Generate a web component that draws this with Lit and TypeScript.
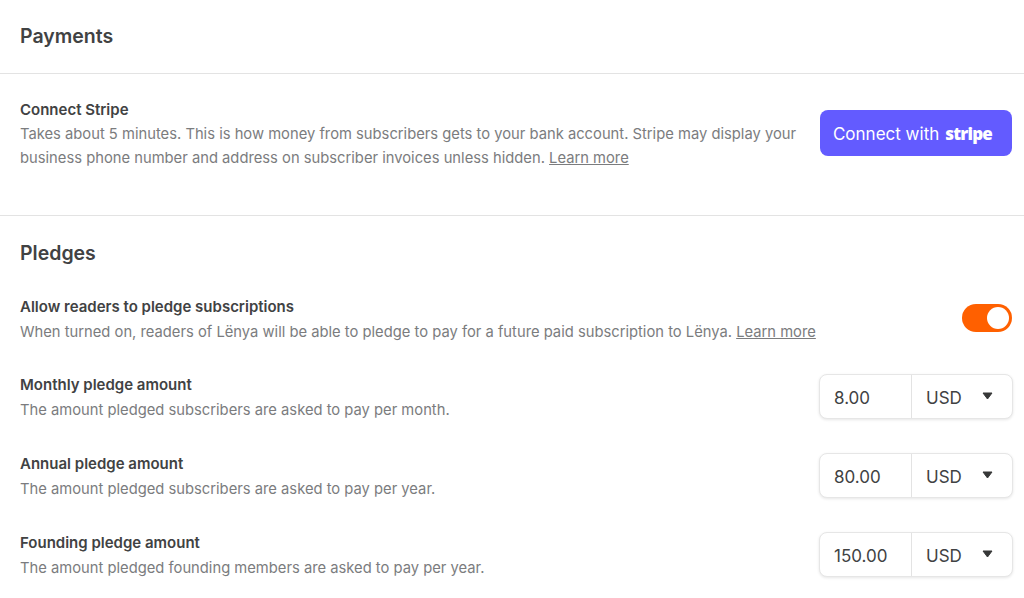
import { LitElement, html, css } from "lit";
import { customElement } from "lit/decorators.js";

const amounts = [
  { title: "Monthly pledge amount", desc: "The amount pledged subscribers are asked to pay per month.", value: "8.00" },
  { title: "Annual pledge amount", desc: "The amount pledged subscribers are asked to pay per year.", value: "80.00" },
  { title: "Founding pledge amount", desc: "The amount pledged founding members are asked to pay per year.", value: "150.00" },
];

@customElement("app-root")
export class AppRoot extends LitElement {
  static styles = css`
    :host { display: block; width: 1024px; height: 598px; overflow: hidden; background: #fff; font-family: Inter, "Liberation Sans", sans-serif; color: #414243; }
    .head { margin: 0; padding: 23px 20px 0; height: 50px; box-sizing: content-box; font-size: 19.5px; line-height: 26px; font-weight: 600; }
    .rule { height: 1px; background: #e3e3e3; }
    .stripe-row { display: flex; justify-content: space-between; padding: 26px 12px 0 20px; height: 115px; box-sizing: content-box; }
    .text { width: 790px; }
    .title { font-size: 15px; line-height: 20px; font-weight: 600; }
    .desc { font-size: 14.76px; line-height: 24px; color: #7b7c7e; margin-top: 2px; }
    .desc a { color: inherit; text-decoration: underline; }
    .connect { flex: none; width: 192px; height: 46px; margin-top: 10px; border: 0; border-radius: 8px; background: #635bff; color: #fff; font: inherit; font-size: 17px; display: flex; align-items: center; justify-content: center; gap: 6px; padding: 2px 7px 0 0; box-sizing: border-box; }
    .brand { font-family: "Open Sans", sans-serif; font-weight: 800; font-size: 17px; letter-spacing: -0.8px; margin-top: -1px; }
    .pledges { padding: 24px 12px 0 20px; }
    .pledges .h2 { font-size: 19.5px; line-height: 26px; font-weight: 600; margin: 0 0 30px; }
    .row { display: flex; justify-content: space-between; align-items: flex-start; height: 79px; }
    .row.first { height: 78px; }
    .row .title { margin-top: 1px; }
    .row .desc { margin-top: 3px; }
    .toggle { flex: none; width: 50px; height: 28px; margin-top: 8px; border-radius: 14px; background: #ff6000; position: relative; }
    .toggle::after { content: ""; position: absolute; right: 3px; top: 3px; width: 22px; height: 22px; border-radius: 50%; background: #fff; }
    .field { flex: none; display: flex; width: 194px; height: 45px; margin-right: -1px; box-sizing: border-box; border: 1px solid #e6e6e6; border-radius: 8px; box-shadow: 0 1px 3px rgba(0,0,0,.1); font-size: 17px; background: #fff; }
    .value { width: 92px; box-sizing: border-box; padding: 1px 0 0 14px; border-right: 1px solid #e3e3e3; line-height: 45px; }
    .cur { flex: 1; display: flex; align-items: center; justify-content: space-between; padding: 3px 19px 0 14px; }
    .cur svg { display: block; margin-top: -5px; }
  `;

  render() {
    return html`
      <h2 class="head">Payments</h2>
      <div class="rule"></div>
      <div class="stripe-row">
        <div class="text">
          <div class="title">Connect Stripe</div>
          <div class="desc">Takes about 5 minutes. This is how money from subscribers gets to your bank account. Stripe may display your business phone number and address on subscriber invoices unless hidden. <a href="#">Learn more</a></div>
        </div>
        <button class="connect">Connect with <span class="brand">stripe</span></button>
      </div>
      <div class="rule"></div>
      <div class="pledges">
        <h2 class="h2">Pledges</h2>
        <div class="row first">
          <div>
            <div class="title">Allow readers to pledge subscriptions</div>
            <div class="desc">When turned on, readers of Lënya will be able to pledge to pay for a future paid subscription to Lënya. <a href="#">Learn more</a></div>
          </div>
          <div class="toggle"></div>
        </div>
        ${amounts.map(a => html`
          <div class="row">
            <div>
              <div class="title">${a.title}</div>
              <div class="desc">${a.desc}</div>
            </div>
            <div class="field">
              <div class="value">${a.value}</div>
              <div class="cur">USD
                <svg width="11" height="8" viewBox="0 0 11 8"><path d="M1 1h9L5.5 7z" fill="#363737" stroke="#363737" stroke-linejoin="round"/></svg>
              </div>
            </div>
          </div>`)}
      </div>
    `;
  }
}
